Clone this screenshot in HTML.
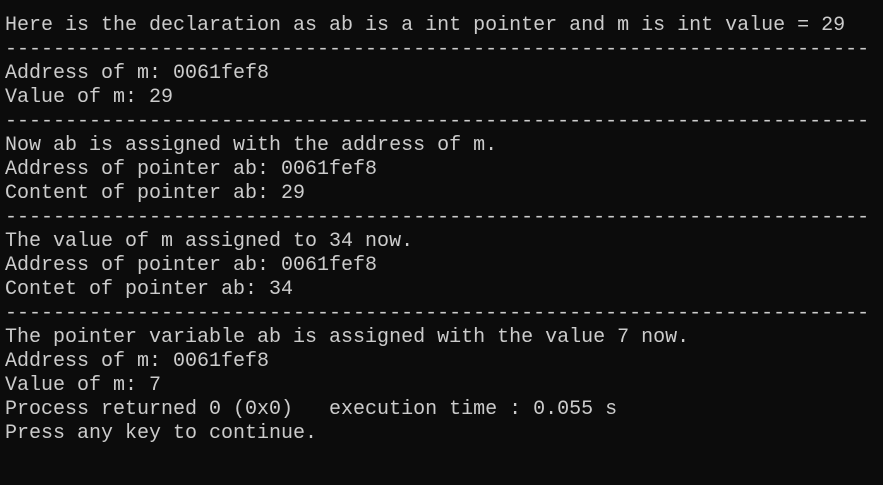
<!DOCTYPE html>
<html><head><style>
html,body{margin:0;padding:0;background:#0c0c0c;width:883px;height:485px;overflow:hidden}
pre{margin:0;position:absolute;left:5px;top:14px;font-family:"Liberation Mono",monospace;font-size:20px;line-height:24px;color:#cccccc;letter-spacing:0}
</style></head><body><pre>Here is the declaration as ab is a int pointer and m is int value = 29
------------------------------------------------------------------------
Address of m: 0061fef8
Value of m: 29
------------------------------------------------------------------------
Now ab is assigned with the address of m.
Address of pointer ab: 0061fef8
Content of pointer ab: 29
------------------------------------------------------------------------
The value of m assigned to 34 now.
Address of pointer ab: 0061fef8
Contet of pointer ab: 34
------------------------------------------------------------------------
The pointer variable ab is assigned with the value 7 now.
Address of m: 0061fef8
Value of m: 7
Process returned 0 (0x0)   execution time : 0.055 s
Press any key to continue.
</pre></body></html>
